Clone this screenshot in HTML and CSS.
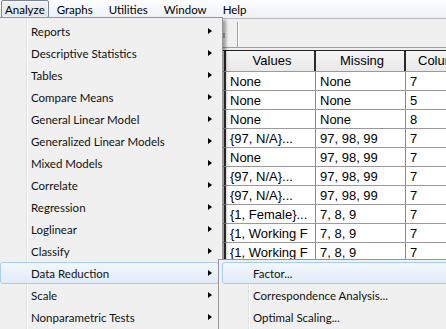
FILE: index.html
```html
<!DOCTYPE html>
<html>
<head>
<meta charset="utf-8">
<link rel="stylesheet" href="styles.css">
</head>
<body>
<div class="menubar">
  <span class="mb-item active">Analyze</span>
  <span class="mb-item">Graphs</span>
  <span class="mb-item">Utilities</span>
  <span class="mb-item">Window</span>
  <span class="mb-item">Help</span>
</div>
<div class="editor">
  <div class="toolbar">
    <span class="grip"></span>
    <span class="sep"></span>
  </div>
  <div class="grid">
    <div class="row head">
      <div class="cell lead"></div>
      <div class="cell c-val">Values</div>
      <div class="cell c-mis">Missing</div>
      <div class="cell c-col">Columns</div>
    </div>
    <div class="row"><div class="cell lead"></div><div class="cell c-val">None</div><div class="cell c-mis">None</div><div class="cell c-col">7</div></div>
    <div class="row"><div class="cell lead"></div><div class="cell c-val">None</div><div class="cell c-mis">None</div><div class="cell c-col">5</div></div>
    <div class="row"><div class="cell lead"></div><div class="cell c-val">None</div><div class="cell c-mis">None</div><div class="cell c-col">8</div></div>
    <div class="row"><div class="cell lead"></div><div class="cell c-val">{97, N/A}...</div><div class="cell c-mis">97, 98, 99</div><div class="cell c-col">7</div></div>
    <div class="row"><div class="cell lead"></div><div class="cell c-val">None</div><div class="cell c-mis">97, 98, 99</div><div class="cell c-col">7</div></div>
    <div class="row"><div class="cell lead"></div><div class="cell c-val">{97, N/A}...</div><div class="cell c-mis">97, 98, 99</div><div class="cell c-col">7</div></div>
    <div class="row"><div class="cell lead"></div><div class="cell c-val">{97, N/A}...</div><div class="cell c-mis">97, 98, 99</div><div class="cell c-col">7</div></div>
    <div class="row"><div class="cell lead"></div><div class="cell c-val">{1, Female}...</div><div class="cell c-mis">7, 8, 9</div><div class="cell c-col">7</div></div>
    <div class="row"><div class="cell lead"></div><div class="cell c-val">{1, Working F</div><div class="cell c-mis">7, 8, 9</div><div class="cell c-col">7</div></div>
    <div class="row"><div class="cell lead"></div><div class="cell c-val">{1, Working F</div><div class="cell c-mis">7, 8, 9</div><div class="cell c-col">7</div></div>
    <div class="row"><div class="cell lead"></div><div class="cell c-val">{1, Working F</div><div class="cell c-mis">7, 8, 9</div><div class="cell c-col">7</div></div>
    <div class="row"><div class="cell lead"></div><div class="cell c-val"></div><div class="cell c-mis"></div><div class="cell c-col"></div></div>
    <div class="row"><div class="cell lead"></div><div class="cell c-val"></div><div class="cell c-mis"></div><div class="cell c-col"></div></div>
  </div>
</div>

<div class="menu main-menu">
  <div class="mi sub">Reports</div>
  <div class="mi sub">Descriptive Statistics</div>
  <div class="mi sub">Tables</div>
  <div class="mi sub">Compare Means</div>
  <div class="mi sub">General Linear Model</div>
  <div class="mi sub">Generalized Linear Models</div>
  <div class="mi sub">Mixed Models</div>
  <div class="mi sub">Correlate</div>
  <div class="mi sub">Regression</div>
  <div class="mi sub">Loglinear</div>
  <div class="mi sub">Classify</div>
  <div class="mi sub hot">Data Reduction</div>
  <div class="mi sub">Scale</div>
  <div class="mi sub">Nonparametric Tests</div>
</div>

<div class="menu sub-menu">
  <div class="mi hot">Factor...</div>
  <div class="mi">Correspondence Analysis...</div>
  <div class="mi">Optimal Scaling...</div>
</div>
</body>
</html>
```

FILE: styles.css
```css
html, body {
  margin: 0;
  padding: 0;
}
body {
  width: 446px;
  height: 329px;
  overflow: hidden;
  position: relative;
  background: #f0f0f0;
  font-family: Lato, "Noto Sans", sans-serif;
  font-size: 11.5px;
  color: #000;
}

/* menu bar */
.menubar {
  height: 18px;
  display: flex;
  align-items: stretch;
  padding-left: 1px;
  background: linear-gradient(#fcfdfe, #edf1f7);
}
.mb-item {
  display: flex;
  align-items: center;
  padding: 0 7px;
  border: 1px solid transparent;
  border-radius: 2px;
}
.mb-item.active {
  padding: 0 3px;
  border-color: #7c8591;
  background: linear-gradient(#eef1f5, #dfe5ec);
  box-shadow: inset 0 0 0 1px rgba(255,255,255,.5);
}

/* editor background */
.editor {
  display: flex;
  flex-direction: column;
}
.toolbar {
  height: 30px;
  border-top: 1px solid #b9b9b9;
  border-bottom: 1px solid #a0a0a0;
  box-sizing: border-box;
  display: flex;
  align-items: stretch;
  padding-left: 223px;
  gap: 12px;
}
.grip {
  width: 2px;
  margin: 14px 0 9px;
  background: #b0b0b0;
}
.sep {
  width: 1px;
  margin: 3px 0 0;
  background: #a0a0a0;
  box-shadow: 1px 0 0 #fff;
}

.grid {
  margin-top: 2px;
  border-top: 1px solid #222;
  background: #fff;
  font-family: "Liberation Sans", Arial, sans-serif;
  font-size: 13px;
}
.row {
  display: grid;
  grid-template-columns: 226px 90px 90px 120px;
  height: 19px;
  border-bottom: 1px solid #9a9a9a;
  box-sizing: border-box;
}
.cell {
  border-right: 1px solid #8a8a8a;
  padding: 1px 0 0 4px;
  white-space: nowrap;
  overflow: hidden;
  line-height: 18px;
}
.cell.lead {
  border-right: 2px solid #333;
  background: #e8e8e8;
  padding: 0;
}
.row.head {
  height: 21px;
  background: linear-gradient(#f4f4f4, #e9e9e9);
  border-bottom: 1px solid #9a9a9a;
}
.row.head .cell {
  text-align: center;
  line-height: 20px;
  padding-top: 0;
  border-right: 2px solid #2a2a2a;
}
.row.head .cell.lead {
  background: #e8e8e8;
}
.row.head .c-col {
  text-align: left;
  padding-left: 12px;
}

/* menus */
.menu {
  position: absolute;
  background: #f0f0f0;
  border: 1px solid #979797;
  padding: 2px 3px;
  box-shadow: 3px 3px 3px rgba(0,0,0,.35);
  background-image: linear-gradient(90deg, transparent 29px, #e2e3e3 29px, #e2e3e3 30px, #fff 30px, #fff 31px, transparent 31px);
  background-repeat: no-repeat;
  background-position: 0 0;
}
.main-menu {
  left: -4px;
  top: 17px;
  width: 219px;
}
.sub-menu {
  left: 218px;
  top: 259px;
  width: 260px;
  height: 80px;
}
.mi {
  height: 22px;
  box-sizing: border-box;
  display: flex;
  align-items: center;
  padding-left: 30px;
  border: 1px solid transparent;
  border-radius: 3px;
  position: relative;
  color: #111;
}
.mi.hot {
  border-color: #a9cdf0;
  background: linear-gradient(#f1f7fd, #e1ecf9);
}
.mi.sub::after {
  content: "";
  position: absolute;
  right: 6px;
  top: 7px;
  border-left: 4px solid #000;
  border-top: 3.5px solid transparent;
  border-bottom: 3.5px solid transparent;
}
```
